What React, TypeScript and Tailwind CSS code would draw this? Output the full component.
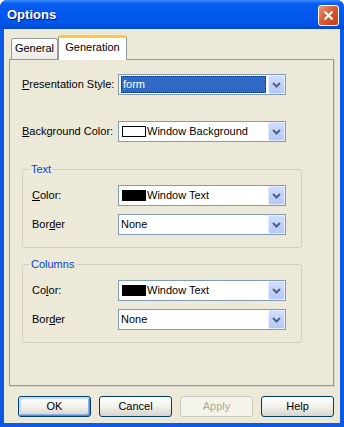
import type { ReactNode } from "react";

function Chevron() {
  return (
    <svg width="9" height="6" viewBox="0 0 9 6" className="block">
      <path d="M1 1L4.5 4.5L8 1" fill="none" stroke="#4D6185" strokeWidth="2" />
    </svg>
  );
}

function ComboBox({
  children,
  selected = false,
}: {
  children: ReactNode;
  selected?: boolean;
}) {
  return (
    <div className="flex h-[21px] w-[168px] items-stretch border border-[#7F9DB9] bg-white">
      <div className="flex flex-1 items-stretch py-px pl-[2px] pr-[2px]">
        {selected ? (
          <div className="flex w-full items-center border border-dotted border-[#222] bg-[#316AC5] pl-px text-white">
            {children}
          </div>
        ) : (
          <div className="flex items-center">{children}</div>
        )}
      </div>
      <div className="flex w-[17px] items-center justify-center rounded-[2px] border border-[#E6EDFE] bg-gradient-to-b from-[#D0DEFD] to-[#B4C8F7]">
        <Chevron />
      </div>
    </div>
  );
}

function Swatch({ fill }: { fill: string }) {
  return <span className={`ml-[1px] mr-[1px] h-[11px] w-[24px] border border-black ${fill}`} />;
}

function Row({ label, width, children }: { label: ReactNode; width: string; children: ReactNode }) {
  return (
    <div className="flex items-center">
      <span className={width}>{label}</span>
      {children}
    </div>
  );
}

function Group({ title, children }: { title: string; children: ReactNode }) {
  return (
    <fieldset className="flex w-[280px] flex-col gap-[8px] rounded-[3px] border border-[#D0D0BF] pb-[12px] pl-[9px] pt-[9px]">
      <legend className="ml-[-3px] px-[2px] leading-[14px] text-[#0046D5]">{title}</legend>
      {children}
    </fieldset>
  );
}

function XpButton({
  label,
  primary = false,
  disabled = false,
}: {
  label: string;
  primary?: boolean;
  disabled?: boolean;
}) {
  if (disabled) {
    return (
      <button className="h-[21px] w-[73px] rounded-[3px] border border-[#C9C7BA] bg-[#F5F4EA] text-[#ACA899]">
        {label}
      </button>
    );
  }
  return (
    <button
      className={`h-[21px] w-[73px] rounded-[3px] border border-[#003C74] bg-gradient-to-b from-white via-[#F2F1EC] to-[#D8D3C8] text-black ${
        primary
          ? "shadow-[inset_1px_1px_0_#CEE7FF,inset_-1px_-1px_0_#6982EE,inset_2px_2px_0_#BCD4F6,inset_-2px_-2px_0_#89ADE4]"
          : ""
      }`}
    >
      {label}
    </button>
  );
}

export default function App() {
  return (
    <div className="flex h-[427px] w-[344px] flex-col overflow-hidden rounded-t-[7px] bg-[#0A5AE6] font-['Liberation_Sans',Arial,sans-serif] text-[11px] text-black">
      <div className="flex h-[29px] shrink-0 items-center justify-between bg-[linear-gradient(to_bottom,#3D8EFF_0%,#0A5EF0_12%,#0058EE_45%,#0055E8_80%,#0047CF_100%)] pl-[7px] pr-[5px]">
        <span className="text-[13px] font-bold text-white [text-shadow:1px_1px_0_#0A1883]">Options</span>
        <button className="mt-[2px] flex h-[21px] w-[21px] items-center justify-center rounded-[3px] border border-white bg-[linear-gradient(135deg,#EB9A7E_0%,#DA5C36_45%,#C13C12_100%)]">
          <svg width="11" height="11" viewBox="0 0 11 11">
            <path d="M1.5 1.5L9.5 9.5M9.5 1.5L1.5 9.5" stroke="white" strokeWidth="2" />
          </svg>
        </button>
      </div>

      <div className="mx-[4px] mb-[4px] flex flex-1 flex-col bg-[#ECE9D8] pt-[6px]">
        <div className="relative z-10 flex h-[24px] items-end pl-[7px]">
          <div className="h-[21px] w-[47px] rounded-t-[3px] border border-b-0 border-[#919B9C] bg-gradient-to-b from-white to-[#ECEBE6] pt-[2px] text-center leading-[14px]">
            General
          </div>
          <div className="-mb-px h-[25px] w-[69px] rounded-t-[3px] border-x border-t-[3px] border-x-[#919B9C] border-t-[#FFC73C] bg-white pt-[2px] text-center leading-[14px]">
            Generation
          </div>
        </div>

        <div className="ml-[5px] flex h-[327px] w-[325px] flex-col border border-[#919B9C] bg-[#ECE9D8] pl-[12px] pt-[14px] shadow-[1px_1px_0_#D6D3C8]">
          <Row
            width="w-[96px]"
            label={
              <>
                <span className="underline">P</span>resentation Style:
              </>
            }
          >
            <ComboBox selected>form</ComboBox>
          </Row>

          <div className="mt-[26px]">
            <Row
              width="w-[96px]"
              label={
                <>
                  <span className="underline">B</span>ackground Color:
                </>
              }
            >
              <ComboBox>
                <Swatch fill="bg-white" />
                Window Background
              </ComboBox>
            </Row>
          </div>

          <div className="mt-[20px]">
            <Group title="Text">
              <Row
                width="w-[86px]"
                label={
                  <>
                    <span className="underline">C</span>olor:
                  </>
                }
              >
                <ComboBox>
                  <Swatch fill="bg-black" />
                  Window Text
                </ComboBox>
              </Row>
              <Row
                width="w-[86px]"
                label={
                  <>
                    Bor<span className="underline">d</span>er
                  </>
                }
              >
                <ComboBox>None</ComboBox>
              </Row>
            </Group>
          </div>

          <div className="mt-[9px]">
            <Group title="Columns">
              <Row
                width="w-[86px]"
                label={
                  <>
                    Co<span className="underline">l</span>or:
                  </>
                }
              >
                <ComboBox>
                  <Swatch fill="bg-black" />
                  Window Text
                </ComboBox>
              </Row>
              <Row
                width="w-[86px]"
                label={
                  <>
                    Bor<span className="underline">d</span>er
                  </>
                }
              >
                <ComboBox>None</ComboBox>
              </Row>
            </Group>
          </div>
        </div>

        <div className="mt-[10px] flex gap-[8px] pl-[14px]">
          <XpButton label="OK" primary />
          <XpButton label="Cancel" />
          <XpButton label="Apply" disabled />
          <XpButton label="Help" />
        </div>
      </div>
    </div>
  );
}
